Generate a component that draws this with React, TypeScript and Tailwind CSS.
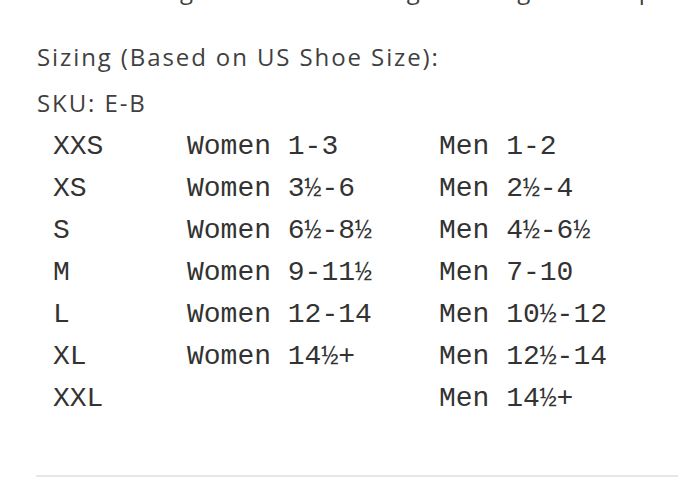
import React from "react";

const rows: [string, string, string][] = [
  ["XXS", "Women 1-3", "Men 1-2"],
  ["XS", "Women 3½-6", "Men 2½-4"],
  ["S", "Women 6½-8½", "Men 4½-6½"],
  ["M", "Women 9-11½", "Men 7-10"],
  ["L", "Women 12-14", "Men 10½-12"],
  ["XL", "Women 14½+", "Men 12½-14"],
  ["XXL", "", "Men 14½+"],
];

export default function App() {
  return (
    <div className="min-h-screen bg-white overflow-hidden">
      <div className="pl-[37px] font-['Open_Sans',sans-serif] text-[24px] tracking-[1.9px] text-[#3f3f3f]">
        {/* previous paragraph, cut off at the top */}
        <p className="-mt-[33px] mb-[21px] leading-[46px] whitespace-nowrap">
          These sizing charts are a long wearing to a stop
        </p>
        <p className="leading-[46px]">Sizing (Based on US Shoe Size):</p>
        <p className="leading-[46px]">SKU: E-B</p>

        <div className="ml-[16px] font-['Liberation_Mono',monospace] text-[28px] leading-[42px] tracking-normal text-[#333333]">
          {rows.map(([size, women, men]) => (
            <div key={size} className="grid grid-cols-[134px_252px_1fr] whitespace-pre">
              <span>{size}</span>
              <span>{women}</span>
              <span>{men}</span>
            </div>
          ))}
        </div>

        <div className="mt-[55px] h-[2px] ml-[-1px] bg-[#e6e6e6]" />
      </div>
    </div>
  );
}
